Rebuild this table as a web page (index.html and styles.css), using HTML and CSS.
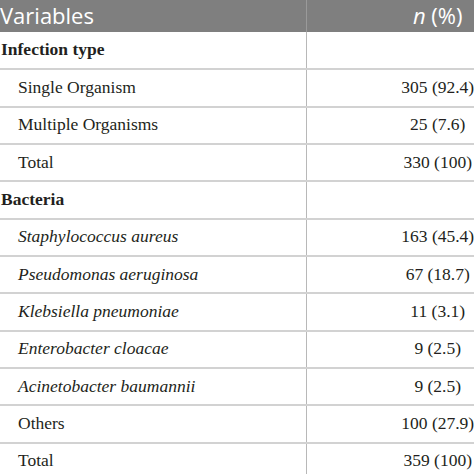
FILE: index.html
```html
<!DOCTYPE html>
<html>
<head>
<meta charset="utf-8">
<link rel="stylesheet" href="styles.css">
</head>
<body>
<div class="frame">
<table class="tbl">
  <colgroup><col class="c1"><col class="c2"></colgroup>
  <thead>
    <tr><th class="h-var">Variables</th><th class="h-n"><i>n</i> (%)</th></tr>
  </thead>
  <tbody>
    <tr><td class="group">Infection type</td><td></td></tr>
    <tr><td class="sub">Single Organism</td><td class="num">305 (92.4)</td></tr>
    <tr><td class="sub">Multiple Organisms</td><td class="num">25 (7.6)</td></tr>
    <tr><td class="sub">Total</td><td class="num">330 (100)</td></tr>
    <tr><td class="group">Bacteria</td><td></td></tr>
    <tr><td class="sub it">Staphylococcus aureus</td><td class="num">163 (45.4)</td></tr>
    <tr><td class="sub it">Pseudomonas aeruginosa</td><td class="num">67 (18.7)</td></tr>
    <tr><td class="sub it">Klebsiella pneumoniae</td><td class="num">11 (3.1)</td></tr>
    <tr><td class="sub it">Enterobacter cloacae</td><td class="num">9 (2.5)</td></tr>
    <tr><td class="sub it">Acinetobacter baumannii</td><td class="num">9 (2.5)</td></tr>
    <tr><td class="sub">Others</td><td class="num">100 (27.9)</td></tr>
    <tr><td class="sub">Total</td><td class="num">359 (100)</td></tr>
  </tbody>
</table>
</div>
</body>
</html>
```
FILE: styles.css
```css
html, body {
  margin: 0;
  padding: 0;
  background: #ffffff;
}
.frame {
  width: 474px;
  height: 474px;
  overflow: hidden;
}
.tbl {
  width: 569px;
  border-collapse: collapse;
  table-layout: fixed;
  font-family: "Liberation Serif", "Times New Roman", serif;
  font-size: 17.5px;
  color: #231f20;
}
.c1 { width: 306px; }
.c2 { width: 263px; }
.tbl th {
  background: #7f7f7f;
  color: #ffffff;
  font-family: "Open Sans", "Noto Sans", sans-serif;
  font-weight: 400;
  font-size: 22px;
  height: 32px;
  padding: 0 0 2px 0;
  line-height: 28px;
  box-sizing: border-box;
  vertical-align: middle;
}
.h-var {
  text-align: left;
  border-right: 1px solid #9a9a9a;
}
.h-n { text-align: center; }
.tbl td {
  height: 37.33px;
  padding: 0 0 2px 0;
  box-sizing: border-box;
  border-bottom: 2px solid #d2d2d2;
  vertical-align: middle;
  line-height: 20px;
}
.tbl td:first-child {
  border-right: 1px solid #b8b8b8;
}
.group {
  font-weight: 700;
  padding-left: 1px !important;
}
.sub { padding-left: 18px !important; }
.it { font-style: italic; }
.num { text-align: center; }
```
